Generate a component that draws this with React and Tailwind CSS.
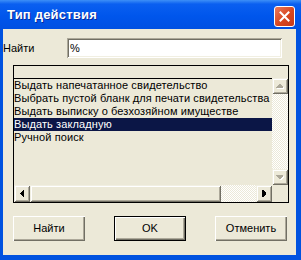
const items = [
  "Выдать напечатанное свидетельство",
  "Выбрать пустой бланк для печати свидетельства",
  "Выдать выписку о безхозяйном имуществе",
  "Выдать закладную",
  "Ручной поиск",
];

const raised =
  "bg-[#ece9d8] shadow-[inset_1px_1px_#f1efe2,inset_-1px_-1px_#716f64,inset_2px_2px_#ffffff,inset_-2px_-2px_#aca899]";
const hatch =
  "bg-[repeating-conic-gradient(#ffffff_0_25%,#ece9d8_0_50%)] bg-[length:2px_2px]";

function Arrow({ dir, disabled }) {
  const pts = {
    up: "3,0 4,0 7,3 7,4 0,4 0,3",
    down: "0,0 7,0 7,1 4,4 3,4 0,1",
    left: "3,0 4,0 4,7 3,7 0,4 0,3",
    right: "0,0 1,0 4,3 4,4 1,7 0,7",
  }[dir];
  const vertical = dir === "up" || dir === "down";
  return (
    <svg
      width={vertical ? 8 : 5}
      height={vertical ? 5 : 8}
      shapeRendering="crispEdges"
    >
      {disabled && <polygon points={pts} fill="#ffffff" transform="translate(1 1)" />}
      <polygon points={pts} fill={disabled ? "#aca899" : "#000000"} />
    </svg>
  );
}

function ScrollButton({ dir, disabled, className = "" }) {
  return (
    <div className={`${raised} flex items-center justify-center ${className}`}>
      <Arrow dir={dir} disabled={disabled} />
    </div>
  );
}

function PushButton({ children, isDefault }) {
  return (
    <button
      className={`w-[72px] h-[25px] bg-[#ece9d8] flex items-center justify-center text-[11px] font-normal ${
        isDefault
          ? "border border-black shadow-[inset_1px_1px_#ffffff,inset_-1px_-1px_#716f64,inset_-2px_-2px_#aca899]"
          : "shadow-[inset_1px_1px_#ffffff,inset_-1px_-1px_#716f64,inset_-2px_-2px_#aca899]"
      }`}
    >
      {children}
    </button>
  );
}

export default function App() {
  const selected = 3;
  return (
    <div className="w-[301px] h-[260px] bg-[#0052e0] flex flex-col font-['Liberation_Sans',Arial,sans-serif] text-[11px] text-black overflow-hidden">
      {/* title bar */}
      <div className="h-[29px] shrink-0 flex items-start justify-between pl-[7px] pr-[6px] bg-[linear-gradient(to_bottom,#3d8ff7_0%,#0a5ff0_14%,#0056ec_55%,#0050e2_100%)]">
        <span className="mt-[7px] text-white font-bold text-[13px] leading-[16px] tracking-[0.2px] [text-shadow:1px_1px_#0a2a9a]">
          Тип действия
        </span>
        <div className="mt-[6px] w-[21px] h-[21px] rounded-[3px] border border-white bg-[linear-gradient(to_bottom_right,#ea7a5c,#d8461e_55%,#c5391a)] flex items-center justify-center">
          <svg width="11" height="11" viewBox="0 0 11 11">
            <path d="M1.5 1.5 L9.5 9.5 M9.5 1.5 L1.5 9.5" stroke="#ffffff" strokeWidth="2" strokeLinecap="square" />
          </svg>
        </div>
      </div>

      {/* frame + body */}
      <div className="flex-1 flex pl-[3px] pr-[5px] pb-[5px]">
        <div className="flex-1 bg-[#ece9d8] flex flex-col">
          {/* search row */}
          <div className="mt-[9px] flex items-center">
            <span className="w-[64px]">Найти</span>
            <div className="w-[215px] h-[20px] bg-white pl-[3px] flex items-center shadow-[inset_1px_1px_#aca899,inset_-1px_-1px_#ffffff,inset_2px_2px_#716f64,inset_-2px_-2px_#f1efe2]">
              %
            </div>
          </div>

          {/* list */}
          <div className="mt-[7px] ml-[10px] w-[276px] h-[138px] border border-black flex flex-col">
            <div className="h-[12px] shrink-0" />
            <div className="h-[107px] flex">
              <div className="w-[258px] border-t border-black overflow-hidden">
                {items.map((item, i) => (
                  <div
                    key={i}
                    className={`h-[13px] leading-[13px] whitespace-nowrap tracking-[0.1px] ${
                      i === selected ? "bg-[#0b1646] text-white" : ""
                    }`}
                  >
                    {item}
                  </div>
                ))}
              </div>
              <div className="w-[16px] flex flex-col">
                <ScrollButton dir="up" disabled className="h-[16px]" />
                <div className={`flex-1 ${hatch}`} />
                <ScrollButton dir="down" disabled className="h-[16px]" />
              </div>
            </div>
            <div className="h-[17px] flex">
              <div className="w-[258px] flex">
                <ScrollButton dir="left" className="w-[16px]" />
                <div className={`w-[191px] ${raised}`} />
                <div className={`flex-1 ${hatch}`} />
                <ScrollButton dir="right" className="w-[16px]" />
              </div>
            </div>
          </div>

          {/* buttons */}
          <div className="mt-[13px] ml-[10px] flex gap-[29px]">
            <PushButton>Найти</PushButton>
            <PushButton isDefault>OK</PushButton>
            <PushButton>Отменить</PushButton>
          </div>
        </div>
      </div>
    </div>
  );
}
